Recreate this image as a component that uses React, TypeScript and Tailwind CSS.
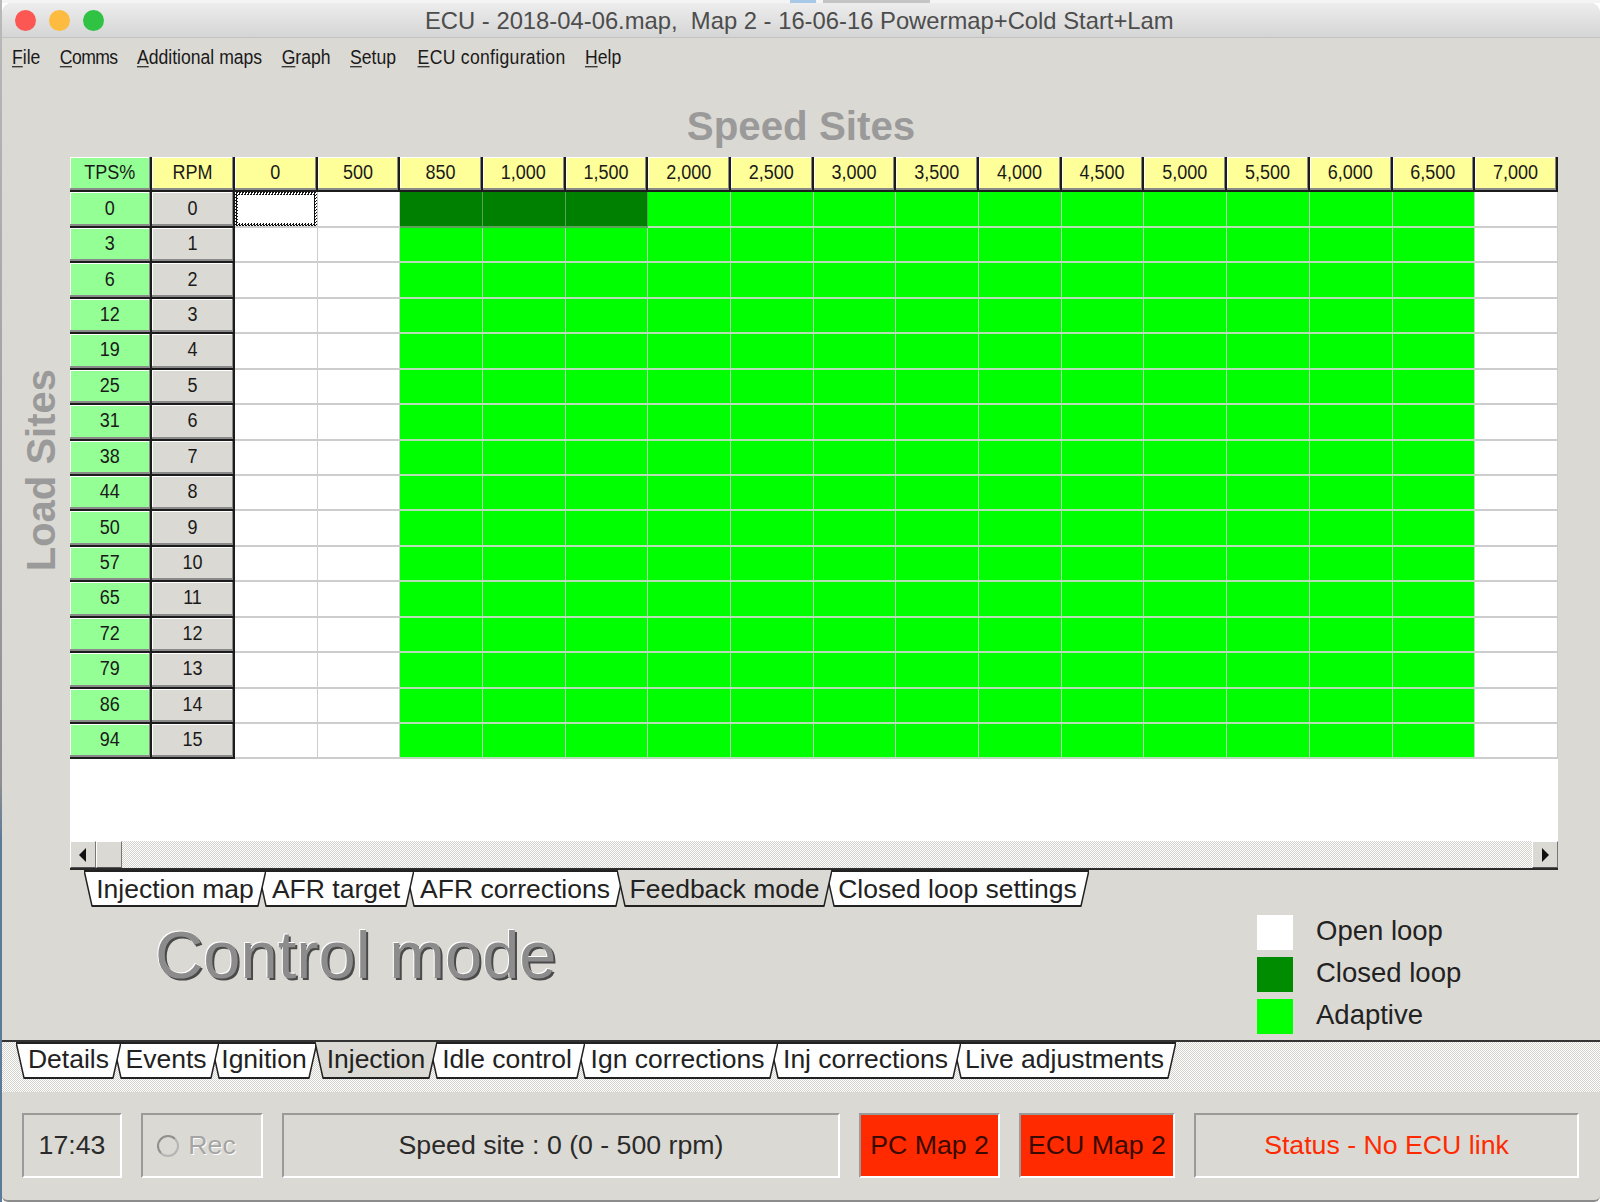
import React from "react";

const speeds = ["0","500","850","1,000","1,500","2,000","2,500","3,000","3,500","4,000","4,500","5,000","5,500","6,000","6,500","7,000"];
const tps = ["0","3","6","12","19","25","31","38","44","50","57","65","72","79","86","94"];

const menu = [
  { k: "F", r: "ile", cls: "" }, { k: "C", r: "omms", cls: "tracking-[-0.6px]" }, { k: "A", r: "dditional maps", cls: "" }, { k: "G", r: "raph", cls: "" },
  { k: "S", r: "etup", cls: "" }, { k: "E", r: "CU configuration", cls: "tracking-[0.3px] ml-[2px]" }, { k: "H", r: "elp", cls: "" },
];

const topTabs = [
  { label: "Injection map", w: 182, cls: "w-[182px] z-[5]" },
  { label: "AFR target", w: 156, cls: "w-[156px] -ml-[8px] z-[4]" },
  { label: "AFR corrections", w: 218, cls: "w-[218px] -ml-[8px] z-[3]" },
  { label: "Feedback mode", w: 215, cls: "w-[215px] -ml-[7px] z-[6]", selected: true },
  { label: "Closed loop settings", w: 263, cls: "w-[263px] -ml-[6px] z-[1]" },
];

const bottomTabs = [
  { label: "Details", w: 105, cls: "w-[105px] z-[8]" },
  { label: "Events", w: 106, cls: "w-[106px] -ml-[8px] z-[7]" },
  { label: "Ignition", w: 106, cls: "w-[106px] -ml-[8px] z-[6]" },
  { label: "Injection", w: 122, cls: "w-[122px] -ml-[2px] z-[9]", selected: true },
  { label: "Idle control", w: 156, cls: "w-[156px] -ml-[8px] z-[5]" },
  { label: "Ign corrections", w: 201, cls: "w-[201px] -ml-[8px] z-[4]" },
  { label: "Inj corrections", w: 191, cls: "w-[191px] -ml-[8px] z-[3]" },
  { label: "Live adjustments", w: 223, cls: "w-[223px] -ml-[8px] z-[2]" },
];

const Tall = ({ children }: { children: React.ReactNode }) => (
  <span className="inline-block scale-y-[1.15]">{children}</span>
);

function Tab({ label, w, cls, selected, textCls }: { label: string; w: number; cls: string; selected?: boolean; textCls: string }) {
  const h = 37;
  const fill = selected ? "#dbd9d3" : "#ffffff";
  return (
    <div className={`relative h-[37px] shrink-0 flex items-center justify-center text-[26.5px] text-[#222] ${cls}`}>
      <svg className="absolute inset-0 w-full h-full" viewBox={`0 0 ${w} ${h}`} preserveAspectRatio="none">
        <polygon points={`0,0 ${w},0 ${w - 8},${h - 1} 8,${h - 1}`} fill={fill} />
        {!selected && <line x1="0" y1="1" x2={w} y2="1" stroke="#222" strokeWidth="2" />}
        <polyline points={`0,0 8,${h - 1} ${w - 8},${h - 1} ${w},0`} fill="none" stroke="#222" strokeWidth="1.5" />
        <line x1="8" y1={h - 1} x2={w - 8} y2={h - 1} stroke="#222" strokeWidth="2" />
      </svg>
      <span className={`relative whitespace-nowrap ${textCls}`}>{label}</span>
    </div>
  );
}

function HeadCell({ text, bg }: { text: string; bg: string }) {
  return (
    <div className={`flex items-center justify-center pb-[2px] text-[18px] text-[#1a1a1a] border-r-2 border-b-2 border-[#1c1c1c] shadow-[inset_-1px_-2px_0_#8a8a8a,inset_1px_1px_0_#ffffff] ${bg}`}>
      <Tall>{text}</Tall>
    </div>
  );
}

function DataCell({ r, c }: { r: number; c: number }) {
  const white = c < 2 || c === 15;
  const dark = r === 0 && c >= 2 && c <= 4;
  const bg = white ? "bg-white" : dark ? "bg-[#008000]" : "bg-[#00ff00]";
  if (r === 0 && c === 0) {
    return (
      <div className="bg-white border-r border-b-2 border-[#cdcdcd]">
        <div className="w-full h-full p-[3px] bg-[repeating-conic-gradient(#111111_0_25%,#ffffff_0_50%)] bg-[length:3px_3px]">
          <div className="w-full h-full bg-white" />
        </div>
      </div>
    );
  }
  return <div className={`border-r border-b-2 ${dark ? "border-[#5aa05a]" : white ? "border-[#cdcdcd]" : "border-[#b9dcb9]"} ${bg}`} />;
}

function Panel({ cls, children }: { cls: string; children: React.ReactNode }) {
  return (
    <div className={`h-[65px] shrink-0 flex items-center justify-center text-[26.7px] border-2 border-t-[#9a9a9a] border-l-[#9a9a9a] border-r-white border-b-white ${cls}`}>
      {children}
    </div>
  );
}

const dither = "bg-[repeating-conic-gradient(#ffffff_0_25%,#d4d2cc_0_50%)] bg-[length:2px_2px]";

export default function App() {
  return (
    <div className="w-[1600px] h-[1202px] overflow-hidden flex bg-white font-['Liberation_Sans',Arial,sans-serif]">
      <div className="w-[2px] shrink-0 bg-[linear-gradient(#b9b9b9_0%,#8f8f8f_65%,#5b7a9a_70%,#5b7a9a_100%)]" />
      <div className="flex-1 flex flex-col min-w-0">
        {/* strip of the window behind */}
        <div className="h-[3px] shrink-0 flex bg-[#f4f4f4]">
          <div className="ml-[788px] w-[26px] bg-[#a8c8e8]" />
          <div className="ml-[7px] w-[107px] bg-[#c4c4c4]" />
        </div>

        <div className="flex-1 flex flex-col bg-[#dbd9d3] rounded-t-[10px] rounded-b-[6px] border-b-2 border-[#8c8c8c] overflow-hidden">
          {/* title bar */}
          <div className="relative h-[35px] shrink-0 flex items-center bg-[linear-gradient(#ededed,#d5d5d5)] border-b border-[#c2c2c2]">
            <div className="ml-[13px] flex gap-[13px]">
              <div className="w-[21px] h-[21px] rounded-full bg-[#fc5753]" />
              <div className="w-[21px] h-[21px] rounded-full bg-[#fdbc40]" />
              <div className="w-[21px] h-[21px] rounded-full bg-[#2fc243]" />
            </div>
            <div className="absolute left-[423px] top-[4px] text-[23.8px] leading-[27px] text-[#4d4d4d] whitespace-pre">
              ECU - 2018-04-06.map,  Map 2 - 16-06-16 Powermap+Cold Start+Lam
            </div>
          </div>

          {/* menu */}
          <div className="h-[38px] shrink-0 flex items-center pl-[10px] gap-[19.5px] text-[17.6px] text-[#1a1a1a]">
            {menu.map((m) => (
              <span key={m.k} className={`inline-block scale-y-[1.15] ${m.cls}`}>
                <span className="underline underline-offset-2 decoration-1">{m.k}</span>
                {m.r}
              </span>
            ))}
          </div>

          {/* Speed Sites */}
          <div className="h-[81px] shrink-0 flex items-center justify-center pt-[22px] text-[40.3px] leading-none font-bold text-[#9a9a9a]">
            Speed Sites
          </div>

          {/* grid region */}
          <div className="flex shrink-0">
            <div className="w-[67.5px] shrink-0 flex items-start justify-center pl-[10px] pt-[212px]">
              <div className="[writing-mode:vertical-rl] rotate-180 text-[40px] leading-none font-bold text-[#9a9a9a] whitespace-nowrap">
                Load Sites
              </div>
            </div>
            <div className="w-[1488.6px] flex flex-col">
              <div className="bg-white h-[684px] flex flex-col">
                <div className="grid grid-cols-[repeat(18,82.7px)] grid-rows-[repeat(17,35.45px)]">
                  <HeadCell text="TPS%" bg="bg-[#94ff94]" />
                  <HeadCell text="RPM" bg="bg-[#ffff99]" />
                  {speeds.map((s, i) => (
                    <HeadCell key={i} text={s} bg="bg-[#ffff99]" />
                  ))}
                  {tps.map((t, r) => (
                    <React.Fragment key={r}>
                      <HeadCell text={t} bg="bg-[#94ff94]" />
                      <HeadCell text={String(r)} bg="bg-[#dbd9d3]" />
                      {speeds.map((_, c) => (
                        <DataCell key={c} r={r} c={c} />
                      ))}
                    </React.Fragment>
                  ))}
                </div>
              </div>
              {/* scrollbar */}
              <div className={`h-[29px] flex justify-between border-b-2 border-[#2a2a2a] ${dither}`}>
                <div className="flex">
                  <div className="w-[26px] flex items-center justify-center bg-[#dbd9d3] border border-t-white border-l-white border-r-[#777] border-b-[#555]">
                    <svg width="8" height="14" viewBox="0 0 8 14"><polygon points="7,0 7,14 0,7" fill="#111" /></svg>
                  </div>
                  <div className="w-[26px] bg-[#dbd9d3] border border-t-white border-l-white border-r-[#777] border-b-[#555]" />
                </div>
                <div className="w-[26px] flex items-center justify-center bg-[#dbd9d3] border border-t-white border-l-white border-r-[#777] border-b-[#555]">
                  <svg width="8" height="14" viewBox="0 0 8 14"><polygon points="1,0 1,14 8,7" fill="#111" /></svg>
                </div>
              </div>
            </div>
          </div>

          {/* map tabs */}
          <div className="h-[37px] shrink-0 flex pl-[82px]">
            {topTabs.map((t) => (
              <Tab key={t.label} {...t} textCls="mt-[2px]" />
            ))}
          </div>

          {/* control mode + legend */}
          <div className="flex-1 flex pl-[153px] min-h-0">
            <div className="w-[1102px] shrink-0 pt-[10px] text-[66.9px] leading-[76px] text-[#8c8c8c] [text-shadow:-1px_-1px_0_#ffffff,2px_2px_0_#4a4a4a]">
              Control mode
            </div>
            <div className="pt-[8px] flex flex-col gap-[7px]">
              {[
                { c: "bg-white", t: "Open loop" },
                { c: "bg-[#008c00]", t: "Closed loop" },
                { c: "bg-[#00ff00]", t: "Adaptive" },
              ].map((l) => (
                <div key={l.t} className="flex items-center gap-[23px] h-[35px]">
                  <div className={`w-[36px] h-[35px] ${l.c}`} />
                  <span className="text-[27.5px] text-[#222] -mt-[4px] whitespace-nowrap">{l.t}</span>
                </div>
              ))}
            </div>
          </div>

          {/* page tabs */}
          <div className={`h-[52px] shrink-0 border-t-2 border-[#333] pl-[14px] flex items-start ${dither}`}>
            {bottomTabs.map((t) => (
              <Tab key={t.label} {...t} textCls="-mt-[2px]" />
            ))}
          </div>

          {/* status bar */}
          <div className="h-[108px] shrink-0 pt-[21px] pl-[20px] flex gap-[19px] items-start">
            <Panel cls="w-[100px] text-[#2a2a2a]">17:43</Panel>
            <Panel cls="w-[122px] text-[#a5a5a5] gap-[9px] pr-[11px]">
              <span className="w-[22px] h-[22px] rounded-full border-2 border-t-[#8f8f8f] border-l-[#8f8f8f] border-r-[#b5b5b5] border-b-[#b5b5b5] bg-[#dbd9d3]" />
              <span className="[text-shadow:1px_1px_0_#ffffff]">Rec</span>
            </Panel>
            <Panel cls="w-[558px] text-[#2a2a2a]">Speed site : 0 (0 - 500 rpm)</Panel>
            <Panel cls="w-[141px] bg-[#ff2a00] text-[#3a0a00]">PC Map 2</Panel>
            <Panel cls="w-[156px] bg-[#ff2a00] text-[#3a0a00]">ECU Map 2</Panel>
            <Panel cls="w-[385px] text-[#ff2a00]">Status - No ECU link</Panel>
          </div>
        </div>
      </div>
    </div>
  );
}
